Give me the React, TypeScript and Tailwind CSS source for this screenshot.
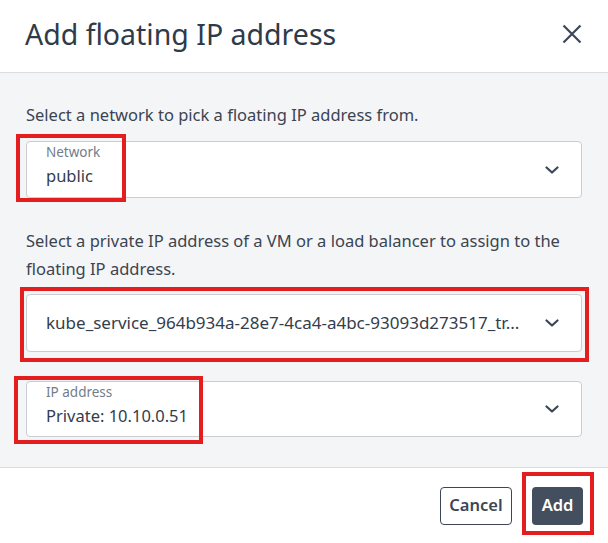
import React from "react";

function Chevron() {
  return (
    <svg width="14" height="8" viewBox="0 0 14 8" className="shrink-0">
      <path d="M1.5 1.5 L7 6.5 L12.5 1.5" fill="none" stroke="#3b4656" strokeWidth="2.2" strokeLinecap="round" strokeLinejoin="round" />
    </svg>
  );
}

function Mark({ className }: { className: string }) {
  return <div className={`pointer-events-none absolute border-4 border-[#e41e1e] ${className}`} />;
}

function Select({
  label,
  value,
  h,
  valueSize = "text-[16.5px]",
  mark,
}: {
  label?: string;
  value: string;
  h: string;
  valueSize?: string;
  mark?: React.ReactNode;
}) {
  return (
    <div className={`relative flex justify-between rounded-[4px] border border-[#c9cdd2] bg-white pl-[19px] pr-[22px] ${label ? "items-start" : "items-center"} ${h}`}>
      <div className={`flex flex-col ${label ? "pt-[2px]" : ""}`}>
        {label && <span className="text-[13.5px] leading-[16px] text-[#737c89]">{label}</span>}
        <span className={`${label ? "mt-[4px]" : ""} ${valueSize} leading-[24px] text-[#333d4c]`}>{value}</span>
      </div>
      <div className="self-center">
        <Chevron />
      </div>
      {mark}
    </div>
  );
}

export default function App() {
  return (
    <div className="h-[543px] w-[608px] overflow-hidden bg-white" style={{ fontFamily: '"Noto Sans", "Open Sans", sans-serif' }}>
      <div className="flex h-[73px] items-center justify-between border-b border-[#d9dde2] pb-[4px] pl-[25px] pr-[26px]">
        <h1 className="text-[28.5px] leading-[36px] text-[#2f3a4a]">Add floating IP address</h1>
        <svg width="20" height="20" viewBox="0 0 20 20">
          <path d="M1.5 1.5 L18.5 18.5 M18.5 1.5 L1.5 18.5" stroke="#3b4656" strokeWidth="2.2" />
        </svg>
      </div>
      <div className="flex h-[394px] flex-col bg-[#f4f5f7] px-[26px] pt-[28px]">
        <p className="text-[16.5px] leading-[28px] text-[#3b4451]">Select a network to pick a floating IP address from.</p>
        <div className="mt-[12px]">
          <Select label="Network" value="public" h="h-[57px]" mark={<Mark className="-left-[11px] -top-[8px] h-[68px] w-[110px]" />} />
        </div>
        <p className="mt-[29px] text-[16.5px] leading-[28px] text-[#3b4451]">
          Select a private IP address of a VM or a load balancer to assign to the floating IP address.
        </p>
        <div className="mt-[11px]">
          <Select
            value="kube_service_964b934a-28e7-4ca4-a4bc-93093d273517_tr..."
            valueSize="text-[17px]"
            h="h-[58px]"
            mark={<Mark className="-left-[7px] -top-[8px] h-[75px] w-[569px]" />}
          />
        </div>
        <div className="mt-[29px]">
          <Select label="IP address" value="Private: 10.10.0.51" h="h-[56px]" mark={<Mark className="-left-[13px] -top-[6px] h-[68px] w-[189px]" />} />
        </div>
      </div>
      <div className="flex h-[76px] items-center justify-end gap-[20px] border-t border-[#d9dde2] pr-[25px]">
        <button className="h-[38px] w-[72px] rounded-[4px] border border-[#3b4656] bg-white text-[16.5px] font-semibold text-[#3b4656]">Cancel</button>
        <div className="relative">
          <button className="h-[38px] w-[51px] rounded-[4px] bg-[#434f5e] text-[16.5px] font-semibold text-white">Add</button>
          <Mark className="-left-[10px] -top-[15px] h-[63px] w-[72px]" />
        </div>
      </div>
    </div>
  );
}
